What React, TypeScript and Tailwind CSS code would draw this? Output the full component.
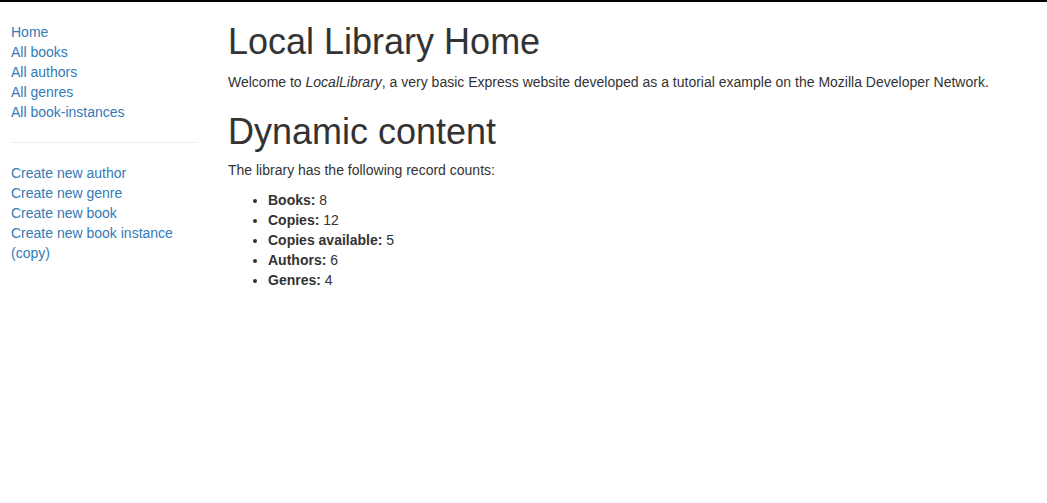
import React from "react";

const browseLinks = ["Home", "All books", "All authors", "All genres", "All book-instances"];
const createLinks = ["Create new author", "Create new genre", "Create new book", "Create new book instance (copy)"];

const counts = [
  { label: "Books:", value: 8 },
  { label: "Copies:", value: 12 },
  { label: "Copies available:", value: 5 },
  { label: "Authors:", value: 6 },
  { label: "Genres:", value: 4 },
];

const App = () => {
  return (
    <div className="min-h-screen bg-white text-[#333] font-['Liberation_Sans',Arial,sans-serif] text-[14px] leading-[20px]">
      <div className="h-[2px] bg-black"></div>
      <div className="flex pl-[11px]">
        <nav className="w-[187px] shrink-0 mt-[20px]">
          <ul>
            {browseLinks.map((l) => (
              <li key={l}>
                <a href="#" className="text-[#337ab7]">
                  {l}
                </a>
              </li>
            ))}
          </ul>
          <hr className="my-[20px] border-[#eee]" />
          <ul>
            {createLinks.map((l) => (
              <li key={l}>
                <a href="#" className="text-[#337ab7]">
                  {l}
                </a>
              </li>
            ))}
          </ul>
        </nav>
        <main className="ml-[30px] flex-1 pr-[15px]">
          <h1 className="mt-[20px] mb-[10px] text-[36px] leading-[1.1] font-normal">Local Library Home</h1>
          <p className="mb-[10px]">
            Welcome to <em>LocalLibrary</em>, a very basic Express website developed as a tutorial example on the
            Mozilla Developer Network.
          </p>
          <h1 className="mt-[20px] mb-[9px] text-[36px] leading-[1.1] font-normal">Dynamic content</h1>
          <p className="mb-[10px]">The library has the following record counts:</p>
          <ul className="list-disc pl-[40px] mb-[10px]">
            {counts.map((c) => (
              <li key={c.label}>
                <strong className="font-bold">{c.label}</strong> {c.value}
              </li>
            ))}
          </ul>
        </main>
      </div>
    </div>
  );
};

export default App;
